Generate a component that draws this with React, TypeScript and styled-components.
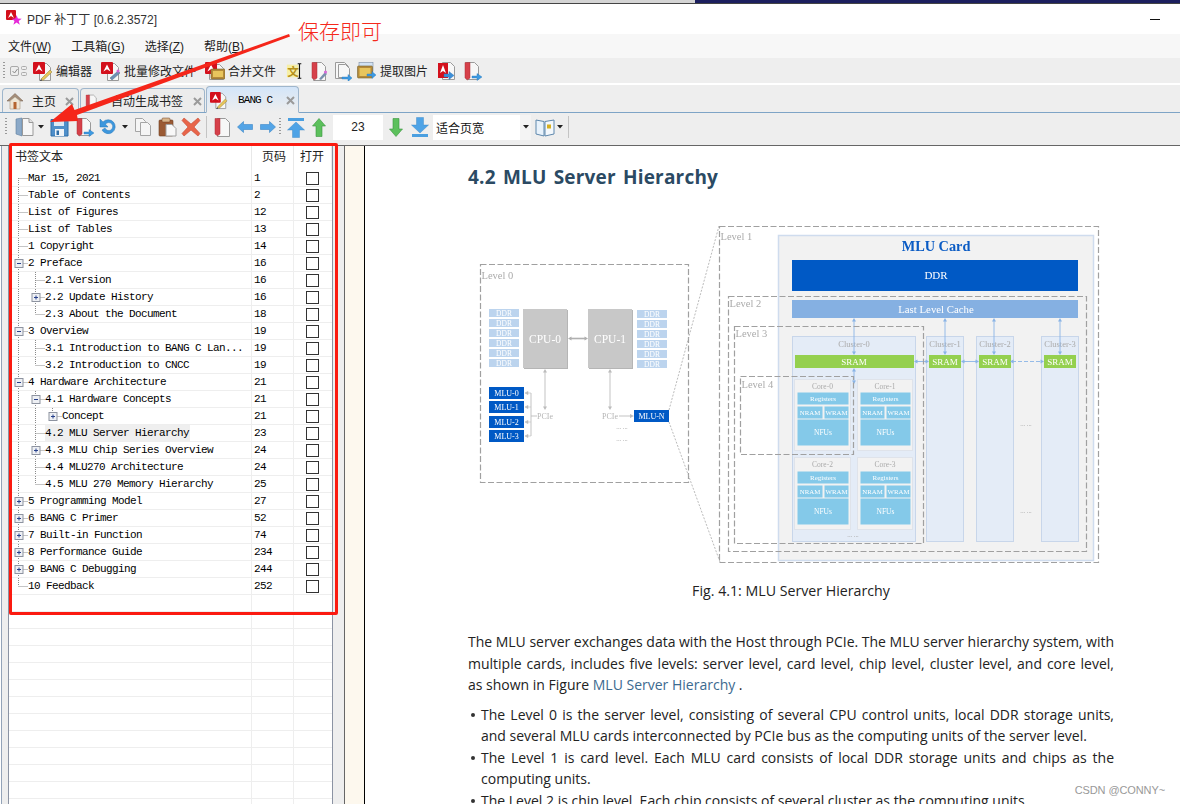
import React from "react";
import styled, { createGlobalStyle } from "styled-components";

const Global = createGlobalStyle`
  html, body { margin: 0; padding: 0; background: #fff; }
  body { font-family: "Liberation Sans", "Noto Sans CJK SC", sans-serif; color: #222; }
  * { box-sizing: border-box; }
`;

const Shell = styled.div`
  position: relative; width: 1180px; height: 804px; overflow: hidden;
  display: flex; flex-direction: column; background: #fff;
`;
const DesktopStrip = styled.div`
  height: 4px; flex: none; display: flex; border-bottom: 1px solid #444;
  background: #d4d4d4;
`;
const DesktopWall = styled.div`
  margin-left: 695px; flex: 1; background: #1c1f5e;
`;
const TitleBar = styled.div`
  height: 30px; flex: none; display: flex; align-items: center; padding: 0 20px 2px 6px; background: #fff;
`;
const TitleText = styled.div`
  margin-left: 5px; font-size: 12px; color: #333; flex: 1; white-space: nowrap;
  font-family: "Liberation Sans", "Noto Sans CJK SC", sans-serif;
`;
const Minimize = styled.div`
  width: 10px; height: 1px; background: #111; margin-top: 2px;
`;
const MenuBar = styled.div`
  height: 24px; flex: none; display: flex; align-items: center; padding: 0 0 2px 8px; gap: 20px;
  background: #f7f7f7; font-size: 12px; color: #222;
`;
const MenuItem = styled.span`
  white-space: nowrap; font-family: "Liberation Sans", "Noto Sans CJK SC", sans-serif;
  u { text-underline-offset: 1px; }
`;
const ToolRow = styled.div`
  height: 25px; flex: none; display: flex; align-items: center; padding-left: 3px;
  background: #eeeeee; border-bottom: 0; font-size: 12px; color: #222;
`;
const WhiteGap = styled.div`height: 2px; flex: none; background: #fff;`;
const Grip = styled.div<{ $ml?: number }>`
  width: 2px; height: 18px; flex: none; margin-left: ${(p) => p.$ml ?? 0}px;
  background: repeating-linear-gradient(to bottom, #999 0 1px, transparent 1px 3px);
`;
const ToolLabel = styled.span<{ $ml?: number }>`
  margin-left: ${(p) => p.$ml ?? 3}px; white-space: nowrap; font-size: 12px;
`;
const Slot = styled.span<{ $ml?: number; $w: number }>`
  display: inline-flex; flex: none; width: ${(p) => p.$w}px; margin-left: ${(p) => p.$ml ?? 0}px;
  align-items: center; justify-content: center;
  svg { display: block; }
`;
const TabBar = styled.div`
  height: 28px; flex: none; display: flex; align-items: flex-end; padding-left: 2px; gap: 1px;
  background: #eeeeee; border-bottom: 1px solid #7ea4c6;
`;
const Tab = styled.div<{ $w: number; $active?: boolean }>`
  width: ${(p) => p.$w}px; height: ${(p) => (p.$active ? 27 : 24)}px; flex: none;
  position: relative; display: flex; align-items: center; padding-left: 3px;
  border: 1px solid #9fb6cc; border-bottom: ${(p) => (p.$active ? "1px solid #eeeeee" : "0")};
  border-radius: 4px 4px 0 0; margin-bottom: ${(p) => (p.$active ? -1 : 0)}px;
  background: ${(p) => (p.$active ? "linear-gradient(#d3e5f9, #eeeeee)" : "#ececec")};
  font-size: 12px; color: #222;
`;
const TabLabel = styled.span<{ $ml: number; $mono?: boolean }>`
  margin-left: ${(p) => p.$ml}px; white-space: nowrap;
  ${(p) => (p.$mono ? 'font-family: "Liberation Mono", monospace; font-size: 11px; letter-spacing: -0.9px; color: #000;' : "")}
`;
const TabClose = styled.span<{ $right: number }>`
  position: absolute; right: ${(p) => p.$right}px; top: 50%; margin-top: -4px; width: 9px; height: 9px;
  svg { display: block; }
`;
const ActionBar = styled.div`
  height: 33px; flex: none; display: flex; align-items: center; padding: 0 0 4px 5px;
  background: #eeeeee; border-bottom: 1px solid #666;
`;
const Separator = styled.div<{ $ml: number }>`
  width: 1px; height: 22px; flex: none; margin-left: ${(p) => p.$ml}px; background: #c4c4c4;
`;
const PageInput = styled.div`
  width: 50px; height: 25px; flex: none; margin-left: 7px; background: #fff; text-align: center;
  font: 12px/25px "Liberation Sans", sans-serif; color: #222;
`;
const Combo = styled.div`
  width: 98px; height: 25px; flex: none; margin-left: 4px; background: #fff; display: flex; align-items: center;
  padding-left: 3px; font-size: 12px; color: #111; position: relative;
`;
const ComboButton = styled.span`
  position: absolute; right: 0; top: 0; bottom: 0; width: 11px; background: #f4f4f4;
  display: flex; align-items: center; justify-content: center;
`;
const Main = styled.div`flex: 1; min-height: 0; display: flex;`;
const SidePanel = styled.div`
  width: 344px; flex: none; display: flex; background: #eeeeee; border-left: 1px solid #93a3b8;
  border-right: 1px solid #666; margin-left: 1px; padding-left: 6px; padding-right: 11px;
`;
const ListBox = styled.div`
  flex: 1; min-width: 0; background: #fff; border-left: 1px solid #8b93a3; border-right: 1px solid #8b93a3;
  overflow: hidden;
`;
const HeaderRow = styled.div`
  height: 24px; display: grid; grid-template-columns: 243px 42px 38px; font-size: 12px; color: #222;
`;
const HeaderCell = styled.div<{ $left?: number }>`
  border-right: 1px solid #e8e8e8; padding-left: ${(p) => p.$left ?? 0}px; line-height: 22px; white-space: nowrap;
`;
const Row = styled.div`
  height: 17px; display: grid; grid-template-columns: 243px 42px 38px; border-bottom: 1px solid #eeeeee;
  font-family: "Liberation Mono", monospace; font-size: 11px; letter-spacing: -0.6px; color: #000;
`;
const TreeCell = styled.div`
  display: flex; align-items: center; border-right: 1px solid #eeeeee; overflow: hidden; white-space: nowrap;
  svg { display: block; flex: none; }
`;
const TreeText = styled.span<{ $sel?: boolean }>`
  background: ${(p) => (p.$sel ? "#efefef" : "transparent")};
  line-height: 16px; padding-right: ${(p) => (p.$sel ? 1 : 0)}px;
`;
const PageCell = styled.div`
  padding-left: 2px; line-height: 16px; border-right: 1px solid #eeeeee;
`;
const CheckCell = styled.div`display: flex; align-items: center; padding-left: 12px;`;
const Check = styled.span`width: 13px; height: 13px; border: 1px solid #333; background: #fff; display: block;`;
const Gutter = styled.div`
  width: 20px; flex: none; background: #fdf8ee; border-right: 1px solid #000;
`;
const PageArea = styled.div`
  flex: 1; min-width: 0; overflow: hidden; padding: 18px 66px 0 103px; background: #fff;
  font-family: "Open Sans", "Noto Sans", sans-serif; color: #222;
`;
const Heading = styled.h2`
  margin: 0; font: 700 19px/26px "Open Sans", "Noto Sans", sans-serif; letter-spacing: 0.2px; color: #2b4a63; word-spacing: 2px;
`;
const Figure = styled.div`
  margin: 30px 0 0 2px;
  svg { display: block; filter: blur(0.4px); }
`;
const Caption = styled.div`
  text-align: center; margin-top: 10px; font-size: 14.2px; line-height: 22px; color: #222;
`;
const Para = styled.div`
  margin: 29px 0 0; font-size: 14px; line-height: 21.5px; color: #222;
  a { color: #3c6a8f; text-decoration: none; }
`;
const ParaLine = styled.div<{ $ws?: number; $just?: boolean }>`
  word-spacing: ${(p) => p.$ws ?? 0}px; white-space: nowrap;
  ${(p) => (p.$just ? "text-align: justify; text-align-last: justify; white-space: normal;" : "")}
`;
const Bullets = styled.ul`
  list-style: none;
  margin: 8px 0 0; padding: 0 0 0 13px; font-size: 14px; line-height: 21.5px; text-align: justify;
  li { margin: 0; position: relative; }
  li::before {
    content: ""; position: absolute; left: -10px; top: 9px; width: 4px; height: 4px; border-radius: 50%; background: #333;
  }
`;
const Overlay = styled.svg`
  position: absolute; left: 0; top: 0; pointer-events: none;
`;
const RedFrame = styled.div`
  position: absolute; left: 9px; top: 143px; width: 329px; height: 472px;
  border: 3px solid #fb1a10; border-radius: 2px; pointer-events: none;
`;
const Callout = styled.div`
  position: absolute; left: 298px; top: 15px; font-size: 21px; line-height: 30px; color: #f5291c; white-space: nowrap;
  font-family: "Noto Sans CJK SC", sans-serif; font-weight: 300;
`;
const Watermark = styled.div`
  position: absolute; right: 15px; top: 782px; font-size: 11px; line-height: 16px; color: #999;
  font-family: "Liberation Sans", sans-serif; letter-spacing: -0.1px;
`;

/* ---------- icons ---------- */
const S: React.FC<{ w?: number; h?: number; vb?: string; children: React.ReactNode }> = ({ w = 20, h = 20, vb = "0 0 20 20", children }) => (
  <svg width={w} height={h} viewBox={vb}>{children}</svg>
);
const RedTile = ({ x = 0, y = 1, s = 12 }: { x?: number; y?: number; s?: number }) => (
  <g>
    <rect x={x} y={y} width={s} height={s} rx="1" fill="#d3101c" />
    <path d={`M${x + s * 0.2} ${y + s * 0.8} L${x + s * 0.5} ${y + s * 0.2} L${x + s * 0.8} ${y + s * 0.8} L${x + s * 0.5} ${y + s * 0.6} Z`} fill="#fff" />
  </g>
);
const Sheet = ({ x = 6, y = 2, w = 11, h = 17 }: { x?: number; y?: number; w?: number; h?: number }) => (
  <path d={`M${x + 0.5} ${y + 0.5} h${w - 4} l4 4 v${h - 4} h-${w} z`} fill="#f7f7f7" stroke="#9a9a9a" />
);
const PdfEdit = () => (
  <S>
    <Sheet />
    <RedTile />
    <path d="M8 18 L17 9 L19 11 L10 19.5 Z" fill="#e8c65a" stroke="#8a7a3a" strokeWidth=".5" />
    <path d="M8 18 l-1 2 2-.6z" fill="#333" />
  </S>
);
const PdfEdit2 = () => (
  <S>
    <Sheet />
    <RedTile />
    <path d="M9 17 L17 10 L19 12 L11 19 Z" fill="#6e8fb4" stroke="#546a85" strokeWidth=".5" />
    <circle cx="17" cy="10" r="1.5" fill="#d264d2" />
  </S>
);
const PdfMerge = () => (
  <S>
    <Sheet x={4} y={3} w={14} h={15} />
    <RedTile y={1} />
    <rect x="6" y="8" width="14" height="10" rx="1" fill="#b58a3a" stroke="#75612e" strokeWidth=".6" />
    <rect x="8" y="10" width="10" height="6" fill="#e8c55d" />
  </S>
);
const TextCursor = () => (
  <S>
    <rect x="1" y="3" width="13" height="14" fill="#f7ee9a" opacity=".85" />
    <text x="1.5" y="15" fontFamily="'Noto Sans CJK SC', sans-serif" fontWeight="700" fontSize="13" fill="#b5901a">文</text>
    <path d="M13 2 h4 M15 2 v16 M13 18 h4" stroke="#111" strokeWidth="1.2" fill="none" />
  </S>
);
const Ribbon = ({ x = 2 }: { x?: number }) => (
  <path d={`M${x} 1.5 h5 v15.5 l-2.5 1.8 l-2.5 -1.8 z`} fill="#d6404a" stroke="#a92e35" strokeWidth=".5" />
);
const BookEdit = () => (
  <S>
    <Sheet x={4} y={1} w={12} h={18} />
    <Ribbon x={3} />
    <path d="M10 18 L16 11 L18 13 L12 19 Z" fill="#7a90ad" />
    <circle cx="16.5" cy="11" r="1.6" fill="#d86ad8" />
  </S>
);
const DocArrow = () => (
  <S>
    <Sheet x={2} y={1} w={13} h={16} />
    <Sheet x={5} y={3} w={11} h={13} />
    <path d="M9 16 h6 v-2.5 l4 3.5 -4 3.5 v-2.5 h-6 z" fill="#3d9ae2" stroke="#2777b8" strokeWidth=".4" />
  </S>
);
const ImgExport = () => (
  <S>
    <rect x="2" y="1.5" width="14" height="9" fill="#d2e2f3" stroke="#7a8ca3" strokeWidth=".6" />
    <rect x="0.5" y="5" width="15" height="12" rx="1" fill="#b58a3a" stroke="#75612e" strokeWidth=".6" />
    <rect x="2.5" y="7" width="11" height="8" fill="#e8c55d" />
    <path d="M10 13 h5 v-2.5 l4 3.5 -4 3.5 v-2.5 h-5 z" fill="#3d9ae2" stroke="#2777b8" strokeWidth=".4" />
  </S>
);
const PdfExport = () => (
  <S>
    <Sheet x={5} y={1} w={12} h={17} />
    <rect x="1" y="2" width="10" height="15" fill="#d3101c" />
    <path d="M3 12 L6 4 L9 12 L6 10 Z" fill="#fff" />
    <path d="M7 13 h5 v-2.5 l5 4 -5 4 v-2.5 h-5 z" fill="#3d8fd8" stroke="#2570b0" strokeWidth=".4" />
  </S>
);
const BookExport = () => (
  <S>
    <Sheet x={3} y={1} w={12} h={17} />
    <Ribbon x={2} />
    <path d="M9 15 h5 v-2.5 l5 3.5 -5 3.5 v-2.5 h-5 z" fill="#3d9ae2" stroke="#2777b8" strokeWidth=".4" />
  </S>
);
const ChecksIcon = () => (
  <S w={18} h={12} vb="0 0 18 12">
    <rect x="0.5" y="1.5" width="8" height="9" rx="1.5" fill="#eee" stroke="#aaa" />
    <path d="M2.5 6 l2 2 3 -4" stroke="#888" fill="none" />
    <rect x="11.5" y="1.5" width="5" height="3" rx="1" fill="#eee" stroke="#aaa" />
    <rect x="11.5" y="7.5" width="5" height="3" rx="1" fill="#eee" stroke="#aaa" />
  </S>
);
const AppIcon = () => (
  <S w={16} h={17} vb="0 0 16 17">
    <rect x="0" y="0" width="10" height="10" rx="1" fill="#d3101c" />
    <path d="M2 8 L5 2 L8 8 L5 6 Z" fill="#fff" />
    <path d="M10.5 5 l1.4 3.6 3.8.1 -3 2.3 1.1 3.7 -3.2-2.2 -3.2 2.2 1.1-3.7 -3-2.3 3.8-.1z" fill="#e62ad8" />
  </S>
);
const HomeIcon = () => (
  <S w={18} h={18} vb="0 0 18 18">
    <path d="M1 9 L9 1.5 L17 9 L14.5 9 L9 4.5 L3.5 9 Z" fill="#a88f7a" stroke="#6e5b4b" strokeWidth=".5" />
    <path d="M4 9 L9 5 L14 9 V17 H4 Z" fill="#efe6d4" stroke="#a79a85" strokeWidth=".6" />
    <rect x="7.5" y="10" width="3" height="7" fill="#b5652f" />
  </S>
);
const Close = () => (
  <S w={9} h={9} vb="0 0 9 9">
    <path d="M1 1 L8 8 M8 1 L1 8" stroke="#9a9a9a" strokeWidth="2" />
  </S>
);
const Caret = () => (
  <S w={6} h={4} vb="0 0 6 4"><path d="M0 0 H6 L3 3.5 Z" fill="#222" /></S>
);
const NewDoc = () => (
  <S>
    <path d="M1 2 L7 1 V19 L1 17 Z" fill="#8ba9c8" stroke="#5f7f9f" strokeWidth=".6" />
    <path d="M7.5 1.5 h6.5 l4 4 v13 h-10.5 z" fill="#f6f6f6" stroke="#999" />
    <path d="M14 1.5 v4 h4" fill="#e2e2e2" stroke="#999" />
  </S>
);
const Save = () => (
  <S w={19} h={19} vb="0 0 19 19">
    <path d="M1 1.5 H16 L18 3.5 V18 H1 Z" fill="#4f8fca" stroke="#2f6ea8" />
    <rect x="4" y="2" width="10" height="6" fill="#dceaf6" />
    <rect x="5" y="11" width="9" height="7" fill="#f0f4f8" />
    <rect x="6.5" y="12.5" width="2.5" height="4.5" fill="#2f6ea8" />
  </S>
);
const Undo = () => (
  <S>
    <path d="M5 5 A7 7 0 1 1 4 13 L7 11 A4 4 0 1 0 7.5 7.2 L10 10 H2 V2 Z" fill="#3d97dd" stroke="#2a78b8" strokeWidth=".5" />
  </S>
);
const Copy = () => (
  <S>
    <path d="M2.5 1.5 h7 l3 3 v10 h-10 z" fill="#f5f5f5" stroke="#a5a5a5" />
    <path d="M7.5 5.5 h7 l3 3 v10 h-10 z" fill="#f5f5f5" stroke="#a5a5a5" />
  </S>
);
const Paste = () => (
  <S>
    <rect x="1" y="3" width="14" height="16" rx="1" fill="#9a5a34" stroke="#6f3f22" strokeWidth=".6" />
    <rect x="4" y="1" width="8" height="4" rx="1" fill="#d8b48a" stroke="#6f3f22" strokeWidth=".5" />
    <path d="M8 7.5 h6 l4 4 v7.5 h-10 z" fill="#f8f8f8" stroke="#a0a0a0" />
  </S>
);
const Del = () => (
  <S>
    <path d="M3 1 L10 7 L17 1 L19 3.5 L13 10 L19 16.5 L17 19 L10 13 L3 19 L1 16.5 L7 10 L1 3.5 Z" fill="#e8654a" stroke="#c44a32" strokeWidth=".6" />
  </S>
);
const Bookmark = () => (
  <S>
    <Sheet x={5} y={1} w={12} h={18} />
    <Ribbon x={3} />
  </S>
);
const ArrowH = ({ dir }: { dir: "l" | "r" }) => (
  <S w={16} h={12} vb="0 0 16 12">
    <g transform={dir === "l" ? "" : "matrix(-1 0 0 1 16 0)"}>
      <path d="M0.5 6 L6.5 0.5 V3.5 H15.5 V8.5 H6.5 V11.5 Z" fill="#53a4e6" stroke="#3a86c6" strokeWidth=".6" />
    </g>
  </S>
);
const ArrowTop = ({ flip }: { flip?: boolean }) => (
  <S w={18} h={21} vb="0 0 18 21">
    <g transform={flip ? "matrix(1 0 0 -1 0 21)" : ""}>
      <rect x="1" y="1" width="16" height="3" fill="#4b9fe0" />
      <path d="M9 5 L17.5 13 H12.5 V20.5 H5.5 V13 H0.5 Z" fill="#4ea3e6" stroke="#2f80c2" strokeWidth=".4" />
    </g>
  </S>
);
const ArrowGreen = ({ flip }: { flip?: boolean }) => (
  <S w={14} h={19} vb="0 0 14 19">
    <g transform={flip ? "matrix(1 0 0 -1 0 19)" : ""}>
      <path d="M7 0.5 L13.5 8 H10 V18.5 H4 V8 H0.5 Z" fill="#5cc05c" stroke="#3a9440" strokeWidth=".6" />
    </g>
  </S>
);
const BookOpen = () => (
  <S w={20} h={19} vb="0 0 20 19">
    <path d="M1 2 L9 3.5 V18 L1 16 Z" fill="#e8f2fb" stroke="#5f88ad" />
    <path d="M19 2 L10 3.5 V18 L19 16 Z" fill="#f4f8fc" stroke="#5f88ad" />
    <rect x="12" y="6.5" width="4" height="4" fill="#d6b020" />
  </S>
);

const Guide: React.FC<{ level: number; exp?: "plus" | "minus"; last?: boolean; first?: boolean; through: number[] }> = ({ level, exp, last, first, through }) => {
  const xs = [9.5, 26.5, 43.5];
  const x = xs[level];
  const w = 19 + level * 17;
  return (
    <svg width={w} height={16} viewBox={`0 0 ${w} 16`}>
      <g stroke="#8a8a8a" strokeWidth="1" strokeDasharray="1 1" fill="none">
        {through.map((t) => <path key={t} d={`M${xs[t]} 0 V16`} />)}
        <path d={`M${x} ${first ? 8 : 0} V${last ? 8 : 16}`} />
        <path d={`M${x} 8.5 H${w}`} />
      </g>
      {exp && (
        <g>
          <rect x={x - 3.5} y={4.5} width={8} height={8} fill="#eef0f4" stroke="#8d93a0" />
          <path d={`M${x - 1.5} 8.5 H${x + 2.5}`} stroke="#27408b" fill="none" />
          {exp === "plus" && <path d={`M${x + 0.5} 6.5 V10.5`} stroke="#27408b" fill="none" />}
        </g>
      )}
    </svg>
  );
};

type Item = { t: string; p: string; l: number; exp?: "plus" | "minus"; last?: boolean; first?: boolean; through: number[]; sel?: boolean };
const items: Item[] = [
  { t: "Mar 15, 2021", p: "1", l: 0, first: true, through: [] },
  { t: "Table of Contents", p: "2", l: 0, through: [] },
  { t: "List of Figures", p: "12", l: 0, through: [] },
  { t: "List of Tables", p: "13", l: 0, through: [] },
  { t: "1 Copyright", p: "14", l: 0, through: [] },
  { t: "2 Preface", p: "16", l: 0, exp: "minus", through: [] },
  { t: "2.1 Version", p: "16", l: 1, through: [0] },
  { t: "2.2 Update History", p: "16", l: 1, exp: "plus", through: [0] },
  { t: "2.3 About the Document", p: "18", l: 1, last: true, through: [0] },
  { t: "3 Overview", p: "19", l: 0, exp: "minus", through: [] },
  { t: "3.1 Introduction to BANG C Lan...", p: "19", l: 1, through: [0] },
  { t: "3.2 Introduction to CNCC", p: "19", l: 1, last: true, through: [0] },
  { t: "4 Hardware Architecture", p: "21", l: 0, exp: "minus", through: [] },
  { t: "4.1 Hardware Concepts", p: "21", l: 1, exp: "minus", through: [0] },
  { t: "Concept", p: "21", l: 2, exp: "plus", last: true, through: [0, 1] },
  { t: "4.2 MLU Server Hierarchy", p: "23", l: 1, through: [0], sel: true },
  { t: "4.3 MLU Chip Series Overview", p: "24", l: 1, exp: "plus", through: [0] },
  { t: "4.4 MLU270 Architecture", p: "24", l: 1, through: [0] },
  { t: "4.5 MLU 270 Memory Hierarchy", p: "25", l: 1, last: true, through: [0] },
  { t: "5 Programming Model", p: "27", l: 0, exp: "plus", through: [] },
  { t: "6 BANG C Primer", p: "52", l: 0, exp: "plus", through: [] },
  { t: "7 Built-in Function", p: "74", l: 0, exp: "plus", through: [] },
  { t: "8 Performance Guide", p: "234", l: 0, exp: "plus", through: [] },
  { t: "9 BANG C Debugging", p: "244", l: 0, exp: "plus", through: [] },
  { t: "10 Feedback", p: "252", l: 0, last: true, through: [] },
];

/* ---------- diagram ---------- */
const T: React.FC<{ x: number; y: number; s?: number; c?: string; a?: "start" | "middle"; b?: boolean; children: React.ReactNode }> = ({ x, y, s = 7, c = "#fff", a = "middle", b, children }) => (
  <text x={x} y={y} fontSize={s} fill={c} textAnchor={a} dominantBaseline="central" fontWeight={b ? 700 : 400} fontFamily="'Liberation Serif', serif">{children}</text>
);
const Dash: React.FC<{ x: number; y: number; w: number; h: number; label: string; dy: number }> = ({ x, y, w, h, label, dy }) => (
  <g>
    <rect x={x} y={y} width={w} height={h} fill="none" stroke="#a0a0a0" strokeWidth="1.2" strokeDasharray="6 2.5" />
    <T x={x + 1} y={y + dy} s={10.5} c="#aaa" a="start">{label}</T>
  </g>
);
const Head = "#bcbcbc";
const VArrow: React.FC<{ x: number; y1: number; y2: number; c?: string }> = ({ x, y1, y2, c = Head }) => (
  <g>
    <path d={`M${x} ${y1 + 2} V${y2 - 2}`} stroke={c} strokeWidth="0.9" />
    <path d={`M${x} ${y1} l-2 3.5 h4 z M${x} ${y2} l-2 -3.5 h4 z`} fill={c} />
  </g>
);
const HArrow: React.FC<{ x1: number; x2: number; y: number; c?: string; dash?: boolean; w?: number }> = ({ x1, x2, y, c = Head, dash, w = 0.9 }) => (
  <g>
    <path d={`M${x1 + 2} ${y} H${x2 - 2}`} stroke={c} strokeWidth={w} strokeDasharray={dash ? "4 2" : undefined} />
    <path d={`M${x1} ${y} l3.5 -2 v4 z M${x2} ${y} l-3.5 -2 v4 z`} fill={c} />
  </g>
);
const Core: React.FC<{ x: number; y: number; w: number; label: string; off: number }> = ({ x, y, w, label, off }) => {
  const ix = x + 3;
  const iw = w - 5;
  const half = Math.round(iw / 2) - 1;
  return (
    <g>
      <rect x={x} y={y} width={w} height={off + 58} fill="#f2f2f2" stroke="#dfe3ea" strokeWidth="1" />
      <T x={x + w / 2} y={y + 7} s={7.5} c="#aaa">{label}</T>
      <rect x={ix} y={y + off} width={iw} height={12} fill="#84c9e9" />
      <T x={ix + iw / 2} y={y + off + 6} s={7}>Registers</T>
      <rect x={ix} y={y + off + 14} width={half} height={12} fill="#84c9e9" />
      <rect x={ix + half + 2} y={y + off + 14} width={iw - half - 2} height={12} fill="#84c9e9" />
      <T x={ix + half / 2} y={y + off + 20} s={6.8}>NRAM</T>
      <T x={ix + half + 2 + (iw - half - 2) / 2} y={y + off + 20} s={6.8}>WRAM</T>
      <rect x={ix} y={y + off + 27} width={iw} height={26} fill="#84c9e9" />
      <T x={ix + iw / 2} y={y + off + 40} s={7.5}>NFUs</T>
    </g>
  );
};
const Diagram = () => {
  const blue = "#8ab4e6";
  const ddrL = [309, 319, 329, 339, 349, 359];
  const mlu = [387, 401, 416, 430];
  return (
    <svg width={640} height={350} viewBox="470 220 640 350">
      <Dash x={480.5} y={264.5} w={208} h={218} label="Level 0" dy={10.5} />
      {ddrL.map((y) => (
        <g key={y}>
          <rect x={489} y={y} width={30} height={8} fill="#bcd4ee" />
          <T x={504} y={y + 4} s={7.5}>DDR</T>
          <rect x={637} y={y + 1} width={30} height={8} fill="#bcd4ee" />
          <T x={652} y={y + 5} s={7.5}>DDR</T>
        </g>
      ))}
      {[523, 588].map((x, i) => (
        <g key={x}>
          <rect x={x + 1} y={310} width={44} height={59} fill="#b5b5b5" />
          <rect x={x} y={309} width={44} height={59} fill="#c8c8c8" />
          <T x={x + 22} y={338.5} s={11.5}>{`CPU-${i}`}</T>
        </g>
      ))}
      <HArrow x1={568} x2={588} y={338.5} c="#b0b0b0" w={1.6} />
      <VArrow x={545} y1={369} y2={410} />
      <VArrow x={610} y1={369} y2={410} />
      {mlu.map((y, i) => (
        <g key={y}>
          <rect x={489} y={y} width={35} height={12} fill="#0059c5" />
          <T x={506.5} y={y + 6} s={8}>{`MLU-${i}`}</T>
          <path d={`M525 ${y + 6} l3 -1.6 v3.2 z M528 ${y + 6} H531`} fill={Head} stroke={Head} strokeWidth=".6" />
        </g>
      ))}
      <path d="M531 393 V436 M531 416 H537" stroke={Head} fill="none" strokeWidth=".9" />
      <T x={545} y={416} s={8} c="#b5b5b5">PCIe</T>
      <T x={610} y={416} s={8} c="#b5b5b5">PCIe</T>
      <path d="M619 416 H630" stroke={Head} strokeWidth=".9" />
      <path d="M634 416 l-4 -2 v4 z" fill={Head} />
      <rect x={634} y={410} width={35} height={12} fill="#0059c5" />
      <T x={651.5} y={416} s={8}>MLU-N</T>
      <T x={622} y={426} s={6.5} c="#aaa">... ...</T>
      <T x={622} y={438} s={6.5} c="#aaa">... ...</T>
      <path d="M669 410 L719 226 M669 422 L720 562" stroke="#aaa" strokeWidth=".8" strokeDasharray="2 1.5" fill="none" />

      <rect x={778.5} y={235.5} width={315} height={325} fill="#f2f2f2" stroke="#cfdcee" strokeWidth="1.5" />
      <T x={936} y={245.5} s={14.3} c="#0a5bc4" b>MLU Card</T>
      <rect x={792} y={260} width={286} height={31} fill="#0059c5" />
      <T x={936} y={275} s={11}>DDR</T>
      <rect x={792} y={300} width={286} height={18} fill="#85b0e2" />
      <T x={936} y={308.5} s={10.8}>Last Level Cache</T>

      <rect x={792.5} y={336.5} width={123} height={205} fill="#e4ecf7" stroke="#c8d6ea" />
      <T x={854} y={344} s={8.5} c="#aaa">Cluster-0</T>
      {[
        [926, "Cluster-1"],
        [976, "Cluster-2"],
        [1041, "Cluster-3"],
      ].map(([x, l]) => (
        <g key={l as string}>
          <rect x={(x as number) + 0.5} y={336.5} width={37} height={205} fill="#e4ecf7" stroke="#c8d6ea" />
          <T x={(x as number) + 19} y={344} s={8.5} c="#aaa">{l}</T>
          <rect x={(x as number) + 3} y={355} width={32} height={13} fill="#94d04f" />
          <T x={(x as number) + 19} y={361.5} s={9}>SRAM</T>
        </g>
      ))}
      <rect x={795} y={355} width={119} height={13} fill="#94d04f" />
      <T x={854} y={361.5} s={9}>SRAM</T>
      <Core x={794.5} y={379.5} w={56} label="Core-0" off={13} />
      <Core x={857.5} y={379.5} w={55} label="Core-1" off={13} />
      <Core x={794.5} y={457.5} w={56} label="Core-2" off={14} />
      <Core x={857.5} y={457.5} w={55} label="Core-3" off={14} />
      <VArrow x={854} y1={318} y2={355} c={blue} />
      <VArrow x={945} y1={318} y2={355} c={blue} />
      <VArrow x={994} y1={318} y2={355} c={blue} />
      <VArrow x={1060} y1={318} y2={355} c={blue} />
      <VArrow x={854} y1={368} y2={384} c={blue} />
      <HArrow x1={914} x2={929} y={361.5} c={blue} />
      <HArrow x1={961} x2={979} y={361.5} c={blue} />
      <HArrow x1={1010} x2={1044} y={361.5} c={blue} dash />
      <T x={1026} y={423} s={6.5} c="#aaa">... ...</T>
      <T x={1026} y={510} s={6.5} c="#aaa">... ...</T>
      <T x={853} y={534} s={6.5} c="#aaa">... ...</T>

      <Dash x={719.5} y={226.5} w={379} h={336} label="Level 1" dy={10} />
      <Dash x={728.5} y={296.5} w={358} h={255} label="Level 2" dy={7} />
      <Dash x={734.5} y={326.5} w={189} h={217} label="Level 3" dy={7} />
      <Dash x={740.5} y={376.5} w={113} h={78} label="Level 4" dy={8} />
    </svg>
  );
};

export default function App() {
  return (
    <Shell>
      <Global />
      <DesktopStrip><DesktopWall /></DesktopStrip>
      <TitleBar>
        <AppIcon />
        <TitleText>PDF 补丁丁 [0.6.2.3572]</TitleText>
        <Minimize />
      </TitleBar>
      <MenuBar>
        <MenuItem>文件(<u>W</u>)</MenuItem>
        <MenuItem>工具箱(<u>G</u>)</MenuItem>
        <MenuItem>选择(<u>Z</u>)</MenuItem>
        <MenuItem>帮助(<u>B</u>)</MenuItem>
      </MenuBar>
      <ToolRow>
        <Grip />
        <Slot $ml={5} $w={18}><ChecksIcon /></Slot>
        <Slot $ml={5} $w={20}><PdfEdit /></Slot>
        <ToolLabel>编辑器</ToolLabel>
        <Slot $ml={9} $w={20}><PdfEdit2 /></Slot>
        <ToolLabel>批量修改文件</ToolLabel>
        <Slot $ml={9} $w={20}><PdfMerge /></Slot>
        <ToolLabel>合并文件</ToolLabel>
        <Slot $ml={10} $w={18}><TextCursor /></Slot>
        <Slot $ml={5} $w={20}><BookEdit /></Slot>
        <Slot $ml={4} $w={20}><DocArrow /></Slot>
        <Slot $ml={4} $w={20}><ImgExport /></Slot>
        <ToolLabel>提取图片</ToolLabel>
        <Slot $ml={9} $w={20}><PdfExport /></Slot>
        <Slot $ml={6} $w={20}><BookExport /></Slot>
      </ToolRow>
      <WhiteGap />
      <TabBar>
        <Tab $w={77}>
          <HomeIcon />
          <TabLabel $ml={8}>主页</TabLabel>
          <TabClose $right={4}><Close /></TabClose>
        </Tab>
        <Tab $w={125}>
          <Slot $w={14}><Bookmark /></Slot>
          <TabLabel $ml={13}>自动生成书签</TabLabel>
          <TabClose $right={2}><Close /></TabClose>
        </Tab>
        <Tab $w={93} $active>
          <Slot $w={18}><PdfEdit /></Slot>
          <TabLabel $ml={10} $mono>BANG C</TabLabel>
          <TabClose $right={3}><Close /></TabClose>
        </Tab>
      </TabBar>
      <ActionBar>
        <Grip />
        <Slot $ml={8} $w={20}><NewDoc /></Slot>
        <Slot $ml={3} $w={6}><Caret /></Slot>
        <Slot $ml={6} $w={19}><Save /></Slot>
        <Slot $ml={6} $w={20}><BookExport /></Slot>
        <Slot $ml={3} $w={20}><Undo /></Slot>
        <Slot $ml={4} $w={6}><Caret /></Slot>
        <Slot $ml={5} $w={20}><Copy /></Slot>
        <Slot $ml={5} $w={20}><Paste /></Slot>
        <Slot $ml={3} $w={20}><Del /></Slot>
        <Separator $ml={5} />
        <Slot $ml={5} $w={20}><Bookmark /></Slot>
        <Slot $ml={5} $w={16}><ArrowH dir="l" /></Slot>
        <Slot $ml={7} $w={16}><ArrowH dir="r" /></Slot>
        <Grip $ml={3} />
        <Slot $ml={6} $w={18}><ArrowTop /></Slot>
        <Slot $ml={7} $w={14}><ArrowGreen /></Slot>
        <PageInput>23</PageInput>
        <Slot $ml={6} $w={14}><ArrowGreen flip /></Slot>
        <Slot $ml={8} $w={18}><ArrowTop flip /></Slot>
        <Combo>适合页宽<ComboButton><Caret /></ComboButton></Combo>
        <Slot $ml={4} $w={20}><BookOpen /></Slot>
        <Slot $ml={2} $w={6}><Caret /></Slot>
        <Separator $ml={5} />
      </ActionBar>
      <Main>
        <SidePanel>
          <ListBox>
            <HeaderRow>
              <HeaderCell $left={6}>书签文本</HeaderCell>
              <HeaderCell $left={10}>页码</HeaderCell>
              <HeaderCell $left={6}>打开</HeaderCell>
            </HeaderRow>
            {items.map((it) => (
              <Row key={it.t}>
                <TreeCell>
                  <Guide level={it.l} exp={it.exp} last={it.last} first={it.first} through={it.through} />
                  <TreeText $sel={it.sel}>{it.t}</TreeText>
                </TreeCell>
                <PageCell>{it.p}</PageCell>
                <CheckCell><Check /></CheckCell>
              </Row>
            ))}
            {Array.from({ length: 14 }, (_, i) => (
              <Row key={i}><TreeCell /><PageCell /><CheckCell /></Row>
            ))}
          </ListBox>
        </SidePanel>
        <Gutter />
        <PageArea>
          <Heading>4.2 MLU Server Hierarchy</Heading>
          <Figure><Diagram /></Figure>
          <Caption>Fig. 4.1: MLU Server Hierarchy</Caption>
          <Para>
            <ParaLine $just $ws={-1.3}>The MLU server exchanges data with the Host through PCIe. The MLU server hierarchy system, with</ParaLine>
            <ParaLine $just $ws={-0.6}>multiple cards, includes five levels: server level, card level, chip level, cluster level, and core level,</ParaLine>
            <ParaLine>as shown in Figure <a>MLU Server Hierarchy</a> .</ParaLine>
          </Para>
          <Bullets>
            <li>The Level 0 is the server level, consisting of several CPU control units, local DDR storage units, and several MLU cards interconnected by PCIe bus as the computing units of the server level.</li>
            <li>The Level 1 is card level. Each MLU card consists of local DDR storage units and chips as the computing units.</li>
            <li>The Level 2 is chip level. Each chip consists of several cluster as the computing units.</li>
          </Bullets>
        </PageArea>
      </Main>
      <RedFrame />
      <Overlay width={1180} height={804} viewBox="0 0 1180 804">
        <path d="M289 34 L290 36.5 L77 115 L78 121 L50 122 L72 104 L74.5 110 Z" fill="#f5261a" />
      </Overlay>
      <Callout>保存即可</Callout>
      <Watermark>CSDN @CONNY~</Watermark>
    </Shell>
  );
}
